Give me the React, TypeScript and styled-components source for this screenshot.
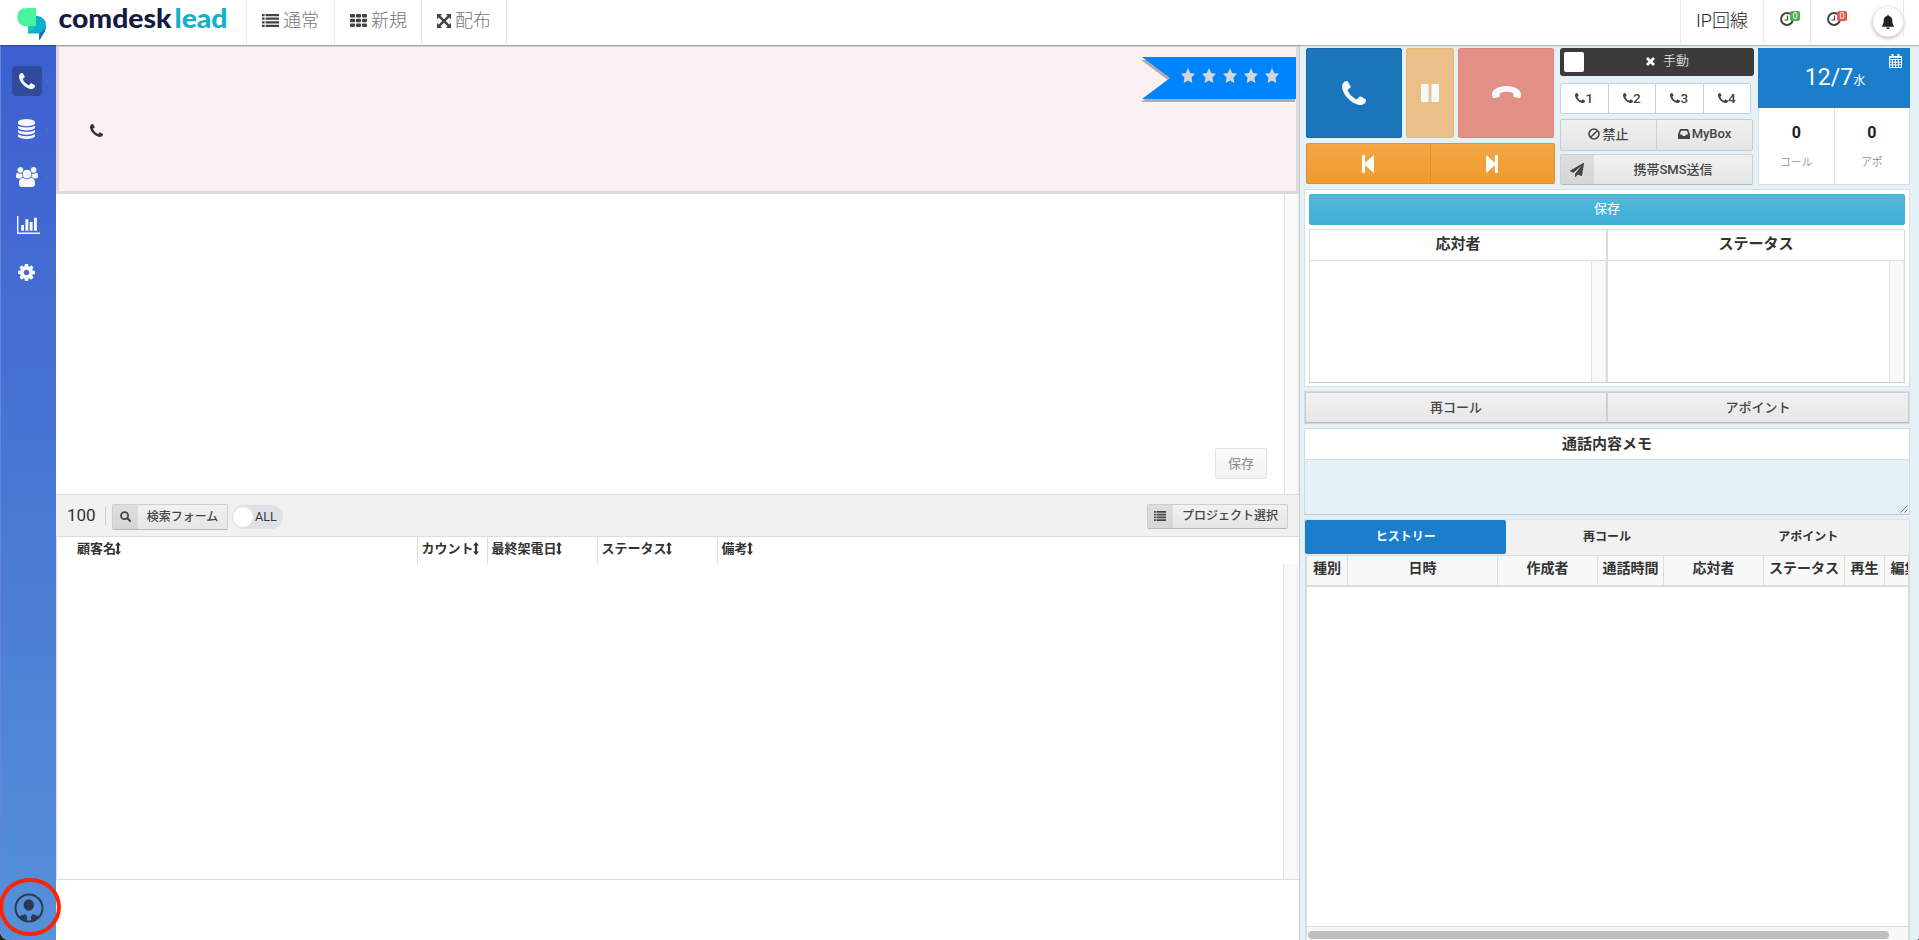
import React from "react";
import styled, { createGlobalStyle, css } from "styled-components";

const GlobalStyle = createGlobalStyle`
  * { box-sizing: border-box; }
  body {
    margin: 0;
    background: #23261f;
    color: #333;
    font-family: Roboto, "Noto Sans CJK JP", sans-serif;
    font-size: 13px;
    overflow: hidden;
  }
  button { font-family: inherit; padding: 0; margin: 0; color: #444; }
`;

/* ---------- icons ---------- */

const PATHS = {
  phone: {
    box: "0 128 1408 1408",
    d: "M1408 1240q0 27-10 70.5t-21 68.5q-21 50-122 106-94 51-186 51-27 0-53-3.5t-57.5-12.5-47-14.5-55.5-20.5-49-18q-98-35-175-83-127-79-264-216t-216-264q-48-77-83-175-3-9-18-49t-20.5-55.5-14.5-47-12.5-57.5-3.5-53q0-92 51-186 56-101 106-122 25-11 68.5-21t70.5-10q14 0 21 3 18 6 53 76 11 19 30 54t35 63.5 31 53.5q3 4 17.5 25t21.5 35.5 7 28.5q0 20-28.5 50t-62 55-62 53-28.5 46q0 9 5 22.5t8.5 20.5 14 24 11.5 19q76 137 174 235t235 174q2 1 19 11.5t24 14 20.5 8.5 22.5 5q18 0 46-28.5t53-62 55-62 50-28.5q14 0 28.5 7t35.5 21.5 25 17.5q25 15 53.5 31t63.5 35 54 30q70 35 76 53 3 7 3 21z",
  },
  database: {
    box: "0 0 1536 1792",
    d: "M768 768q237 0 443-43t325-127v170q0 69-103 128t-280 93.5-385 34.5-385-34.5-280-93.5-103-128v-170q119 84 325 127t443 43zm0 768q237 0 443-43t325-127v170q0 69-103 128t-280 93.5-385 34.5-385-34.5-280-93.5-103-128v-170q119 84 325 127t443 43zm0-384q237 0 443-43t325-127v170q0 69-103 128t-280 93.5-385 34.5-385-34.5-280-93.5-103-128v-170q119 84 325 127t443 43zm0-1152q208 0 385 34.5t280 93.5 103 128v128q0 69-103 128t-280 93.5-385 34.5-385-34.5-280-93.5-103-128v-128q0-69 103-128t280-93.5 385-34.5z",
  },
  users: {
    box: "0 0 1920 1792",
    d: "M593 896q-162 5-265 128h-134q-82 0-138-40.5t-56-118.5q0-353 124-353 6 0 43.5 21t97.5 42.5 119 21.5q67 0 133-23-5 37-5 66 0 139 81 256zm1071 637q0 120-73 189.5t-194 69.5h-874q-121 0-194-69.5t-73-189.5q0-53 3.5-103.5t14-109 26.5-108.5 43-97.5 62-81 85.5-53.5 111.5-20q10 0 43 21.5t73 48 107 48 135 21.5 135-21.5 107-48 73-48 43-21.5q61 0 111.5 20t85.5 53.5 62 81 43 97.5 26.5 108.5 14 109 3.5 103.5zm-1024-1277q0 106-75 181t-181 75-181-75-75-181 75-181 181-75 181 75 75 181zm704 384q0 159-112.5 271.5t-271.5 112.5-271.5-112.5-112.5-271.5 112.5-271.5 271.5-112.5 271.5 112.5 112.5 271.5zm576 225q0 78-56 118.5t-138 40.5h-134q-103-123-265-128 81-117 81-256 0-29-5-66 66 23 133 23 59 0 119-21.5t97.5-42.5 43.5-21q124 0 124 353zm-128-609q0 106-75 181t-181 75-181-75-75-181 75-181 181-75 181 75 75 181z",
  },
  chart: {
    box: "0 0 23 18",
    d: "M0 0h1.4v16.5h21.6v1.5h-23zM4.2 9h2.8v5.8h-2.8zM8.4 3.2h2.9v11.6h-2.9zM12.7 6h2.9v8.8h-2.9zM17 1.7h2.9v13.1h-2.9z",
  },
  cog: {
    box: "128 128 1536 1536",
    d: "M1152 896q0-106-75-181t-181-75-181 75-75 181 75 181 181 75 181-75 75-181zm512-109v222q0 12-8 23t-20 13l-185 28q-19 54-39 91 35 50 107 138 10 12 10 25t-9 23q-27 37-99 108t-94 71q-12 0-26-9l-138-108q-44 23-91 38-16 136-29 186-7 28-36 28h-222q-14 0-24.5-8.5t-11.5-21.5l-28-184q-49-16-90-37l-141 107q-10 9-25 9-14 0-25-11-126-114-165-168-7-10-7-23 0-12 8-23 15-21 51-66.5t54-70.5q-27-50-41-99l-183-27q-13-2-21-12.5t-8-23.5v-222q0-12 8-23t19-13l186-28q14-46 39-92-40-57-107-138-10-12-10-24 0-10 9-23 26-36 98.5-107.5t94.5-71.5q13 0 26 10l138 107q44-23 91-38 16-136 29-186 7-28 36-28h222q14 0 24.5 8.5t11.5 21.5l28 184q49 16 90 37l142-107q9-9 24-9 13 0 25 10 129 119 165 170 7 8 7 22 0 12-8 23-15 21-51 66.5t-54 70.5q26 50 41 98l183 28q13 2 21 12.5t8 23.5z",
  },
  list: {
    box: "0 0 17 13",
    d: "M0 0h2.6v2.2H0zM3.6 0H17v2.2H3.6zM0 3.6h2.6v2.2H0zM3.6 3.6H17v2.2H3.6zM0 7.2h2.6v2.2H0zM3.6 7.2H17v2.2H3.6zM0 10.8h2.6V13H0zM3.6 10.8H17V13H3.6z",
  },
  grid: {
    box: "0 0 17 13",
    d: "M.8 0h3.4q.8 0 .8.8v1.900q0 .8-.8.8H.8q-.8 0-.8-.8V.8Q0 0 .8 0zM6.8 0h3.4q.8 0 .8.8v1.900q0 .8-.8.8H6.8q-.8 0-.8-.8V.8q0-.8.8-.8zM12.8 0h3.4q.8 0 .8.8v1.900q0 .8-.8.8h-3.400q-.8 0-.8-.8V.8q0-.8.8-.8zM.8 4.700h3.400q.8 0 .8.8v1.900q0 .8-.8.8H.8q-.8 0-.8-.8V5.500q0-.8.8-.8zM6.800 4.700h3.400q.8 0 .8.8v1.900q0 .8-.8.8H6.800q-.8 0-.8-.8V5.500q0-.8.8-.8zM12.800 4.700h3.400q.8 0 .8.8v1.900q0 .8-.8.8h-3.400q-.8 0-.8-.8V5.500q0-.8.8-.8zM.8 9.400h3.400q.8 0 .8.8v1.900q0 .8-.8.8H.8q-.8 0-.8-.8v-1.900q0-.8.8-.8zM6.800 9.400h3.400q.8 0 .8.8v1.900q0 .8-.8.8H6.800q-.8 0-.8-.8v-1.900q0-.8.8-.8zM12.800 9.400h3.400q.8 0 .8.8v1.900q0 .8-.8.8h-3.400q-.8 0-.8-.8v-1.900q0-.8.8-.8z",
  },
  expand: {
    box: "0 0 14 14",
    d: "M0 0h5.2L3.5 1.7 7 5.2l3.5-3.5L8.8 0H14v5.2l-1.7-1.7L8.8 7l3.5 3.5L14 8.8V14H8.8l1.7-1.7L7 8.8l-3.5 3.5L5.2 14H0V8.8l1.7 1.7L5.2 7 1.7 3.5 0 5.2z",
  },
  star: {
    box: "0 0 1664 1587",
    d: "M832 0L1089 521 1664 605 1248 1010 1346 1583 832 1312 318 1583 416 1010 0 605 575 521z",
  },
  plane: {
    box: "0 0 1792 1792",
    d: "M1764 11q33 24 27 64l-256 1536q-5 29-32 45-14 8-31 8-11 0-24-5l-453-185-242 295q-18 23-49 23-13 0-22-4-19-7-30.5-23.5t-11.5-36.5v-349l864-1059-1069 925-395-162q-37-14-40-55-2-40 32-59l1664-960q15-9 32-9 20 0 36 11z",
  },
  pause: { box: "0 0 18 18", d: "M1 0h5.600q1 0 1 1v16q0 1-1 1H1q-1 0-1-1V1q0-1 1-1zM11.400 0H17q1 0 1 1v16q0 1-1 1h-5.600q-1 0-1-1V1q0-1 1-1z" },
  prev: { box: "0 0 12 18", d: "M0 .7Q0 0 .7 0h1.8q.6 0 .6.7v7.1L12 0v18L3.1 10.2v7.1q0 .7-.6.7H.7q-.7 0-.7-.7z" },
  next: { box: "0 0 12 18", d: "M12 .7q0-.7-.7-.7H9.5q-.6 0-.6.7v7.1L0 0v18l8.9-7.8v7.1q0 .7.6.7h1.8q.7 0 .7-.7z" },
  hangup: {
    box: "0 0 30 14",
    d: "M15 0C6 0 0 4 0 9.2c0 1 .1 2.3.7 3.2.4.6 1 .8 1.8.6l4-.8c1-.2 1.5-.8 1.5-1.7l-.1-2.600C9.500 6.700 12 6.100 15 6.100s5.500.6 7.100 1.800l-.1 2.600c0 .9.5 1.500 1.500 1.700l4 .8c.8.2 1.400 0 1.800-.6.6-.9.700-2.200.7-3.200C30 4 24 0 15 0z",
  },
  close: { box: "0 0 10 10", d: "M2.2 0L5 2.8 7.8 0 10 2.2 7.2 5 10 7.8 7.8 10 5 7.2 2.2 10 0 7.8 2.8 5 0 2.2z" },
  bell: {
    box: "0 0 14 16",
    d: "M7 0c.7 0 1 .5 1 1.100C10.500 1.600 12 3.500 12 6c0 3.500.7 5.300 2 6.600v.9H0v-.9C1.300 11.300 2 9.500 2 6c0-2.500 1.500-4.400 4-4.900C6 .5 6.300 0 7 0zM5.100 14.200h3.800c0 1.100-.8 1.800-1.900 1.800s-1.900-.7-1.900-1.800z",
  },
  inbox: {
    box: "0 0 14 12",
    d: "M3 0h8q.6 0 .9.6L14 6.200V11q0 1-1 1H1q-1 0-1-1V6.200L2.100.6Q2.400 0 3 0zM3.600 2L2.100 6.500h2.600l.9 2h2.800l.9-2h2.600L10.400 2z",
  },
  sort: { box: "0 0 6 12", d: "M3 0l3 3.200H4.100v5.600H6L3 12 0 8.800h1.900V3.200H0z" },
};

type IconName = keyof typeof PATHS;

const Glyph = styled.svg<{ $w: number; $h: number }>`
  display: block;
  flex: none;
  width: ${(p) => p.$w}px;
  height: ${(p) => p.$h}px;
  fill: currentColor;
`;

const Icon = ({ name, w, h = w }: { name: IconName; w: number; h?: number }) => (
  <Glyph viewBox={PATHS[name].box} preserveAspectRatio="none" $w={w} $h={h}>
    <path fillRule="evenodd" d={PATHS[name].d} />
  </Glyph>
);

/* ---------- frame ---------- */

const Frame = styled.div`
  display: flex;
  flex-direction: column;
  width: 1919px;
  height: 940px;
  background: #fff;
  border-radius: 0 0 3px 9px;
  overflow: hidden;
  position: relative;
`;
const Header = styled.header`
  display: flex;
  flex: none;
  height: 45px;
  position: relative;
  z-index: 1;
  background: #fff;
  box-shadow: 0 1px 1px rgba(0, 0, 0, 0.25);
`;
const Logo = styled.div`
  width: 246px;
  padding-left: 17px;
`;
const NavItem = styled.a<{ $w: number }>`
  display: flex;
  align-items: center;
  gap: 4px;
  width: ${(p) => p.$w}px;
  height: 44px;
  padding: 0 0 3px 15px;
  border-left: 1px solid #e7e7e7;
  color: #444;
  span { font-size: 18px; color: #767676; line-height: 26px; font-weight: 300; }
`;
const NavEnd = styled.div`
  flex: 1;
  height: 44px;
  border-left: 1px solid #e7e7e7;
`;
const HeadCell = styled.div<{ $w: number }>`
  display: flex;
  align-items: center;
  justify-content: center;
  width: ${(p) => p.$w}px;
  height: 44px;
  padding-bottom: 6px;
  border-left: 1px solid #e7e7e7;
  font-size: 18px;
  font-weight: 300;
  color: #222;
`;
const AlertCell = styled.div<{ $w: number }>`
  display: flex;
  gap: 26px;
  width: ${(p) => p.$w}px;
  height: 44px;
  padding: 12px 0 0 16px;
  border-left: 1px solid #e7e7e7;
`;
const HeadEnd = styled.div`
  width: 16px;
  height: 37px;
  border-left: 1px solid #e7e7e7;
`;
const ClockWrap = styled.div`
  position: relative;
  width: 20px;
  height: 16px;
`;
const Badge = styled.span<{ $c: string }>`
  position: absolute;
  left: 10px;
  top: -1px;
  width: 10px;
  height: 10px;
  border-radius: 2px;
  background: ${(p) => p.$c};
  color: #fff;
  font-size: 9px;
  line-height: 10px;
  text-align: center;
`;
const Bell = styled.button`
  display: flex;
  align-items: center;
  justify-content: center;
  flex: none;
  width: 30px;
  height: 30px;
  margin-top: -5px;
  border: 0;
  border-radius: 50%;
  background: #fff;
  color: #222;
  box-shadow: 0 1px 4px rgba(0, 0, 0, 0.35);
`;
const Body = styled.div`
  display: flex;
  flex: 1;
  min-height: 0;
`;

/* ---------- sidebar ---------- */

const Sidebar = styled.nav`
  display: flex;
  flex-direction: column;
  gap: 17.850px;
  flex: none;
  width: 56px;
  padding: 21px 0 0 11px;
  border-left: 1px solid #6684dc;
  background: linear-gradient(#3d5fd0, #4a7ad3 55%, #5591d9);
`;
const SideItem = styled.a<{ $active?: boolean; $shift?: number }>`
  display: flex;
  align-items: center;
  height: 30px;
  color: #f8f8f8;
  > div {
    display: flex;
    align-items: center;
    justify-content: center;
    width: 30px;
    height: 30px;
    padding: 0 1px 0 ${(p) => p.$shift ?? 0}px;
    border-radius: 4px;
    ${(p) => p.$active && css`background: #304b9c;`}
  }
  > svg:last-child { margin-left: 3px; fill: none; stroke: #5c70a8; }
`;
const UserMark = styled.div`
  position: absolute;
  left: -1px;
  top: 878px;
  width: 62px;
  height: 58px;
  padding: 11px 0 0 11px;
  border: 4px solid #ff2305;
  border-radius: 30px / 29px;
`;

const Chevron = () => (
  <Glyph viewBox="0 0 4 6" $w={4} $h={6}><path d="M.6.500L3.200 3 .6 5.500" /></Glyph>
);

/* ---------- main column ---------- */

const Main = styled.main`
  display: flex;
  flex-direction: column;
  width: 1243px;
  flex: none;
`;
const Customer = styled.section`
  display: flex;
  justify-content: space-between;
  height: 149px;
  padding: 10px 0 0 31px;
  border: 3px solid #dddada;
  border-top-width: 2px;
  background: #fbf1f0;
  > svg { margin-top: 67px; }
`;
const Ribbon = styled.div`
  width: 154px;
  height: 46px;
  filter: drop-shadow(-1px 3px 0 #b0adb0);
`;
const RibbonBody = styled.div`
  display: flex;
  gap: 7px;
  height: 42px;
  padding: 11px 0 0 39px;
  background: #0084fd;
  color: #d6d6d6;
  clip-path: polygon(0 0, 100% 0, 100% 100%, 0 100%, 28px 50%);
`;
const Detail = styled.section`
  display: flex;
  height: 300px;
`;
const DetailBody = styled.div`
  display: flex;
  flex: 1;
  align-items: flex-end;
  justify-content: flex-end;
  padding: 0 17px 15px 0;
`;
const Gutter = styled.div`
  width: 15px;
  flex: none;
  background: #f9f9f9;
  border-left: 1px solid #e3e3e3;
  border-right: 1px solid #ececec;
`;
const GhostButton = styled.button`
  width: 52px;
  height: 31px;
  padding-bottom: 3px;
  border: 1px solid #e2e2e2;
  border-radius: 2px;
  background: linear-gradient(#fafafa, #f3f3f3);
  color: #8d8d8d;
  font-size: 13px;
`;
const Toolbar = styled.div`
  display: flex;
  align-items: center;
  height: 43px;
  padding: 0 11px;
  background: #f1f1f1;
  border-top: 1px solid #dcdcdc;
  border-bottom: 1px solid #dcdcdc;
`;
const Count = styled.span`
  width: 39px;
  height: 18px;
  border-right: 1px solid #ccc;
  margin-right: 6px;
  font-size: 17px;
  line-height: 17px;
`;
const LabeledButton = styled.button<{ $w: number; $h: number; $icon: number; $fs?: number; $drop?: number }>`
  display: flex;
  align-items: stretch;
  width: ${(p) => p.$w}px;
  height: ${(p) => p.$h}px;
  margin-top: ${(p) => p.$drop ?? 0}px;
  border: 1px solid #cfcfcf;
  border-bottom-color: #b8b8b8;
  border-radius: 2px;
  background: linear-gradient(#f1f1f1, #e6e6e6);
  font-size: ${(p) => p.$fs ?? 12}px;
  font-weight: 500;
  > div {
    display: flex;
    align-items: center;
    justify-content: center;
    width: ${(p) => p.$icon}px;
    padding-right: 1px;
    background: linear-gradient(#dedede, #d6d6d6);
  }
  > span { flex: 1; align-self: center; text-align: center; line-height: 18px; }
`;
const Toggle = styled.div`
  display: flex;
  align-items: center;
  gap: 2px;
  width: 51px;
  height: 24px;
  margin: 2px 0 0 4px;
  padding-left: 1px;
  border-radius: 12px;
  background: #dfe1e6;
  color: #333a48;
  font-size: 12.500px;
  i { width: 20px; height: 20px; border-radius: 50%; background: #fff; }
`;
const Spacer = styled.div`flex: 1;`;
const ListHead = styled.div`
  display: flex;
  height: 27px;
  border-left: 1px solid #ddd;
`;
const ListCol = styled.div<{ $w?: number; $first?: boolean }>`
  display: flex;
  align-items: center;
  ${(p) => (p.$w ? css`width: ${p.$w}px;` : css`flex: 1;`)}
  padding: 0 0 4px ${(p) => (p.$first ? 20 : 3.5)}px;
  ${(p) => !p.$first && css`border-left: 1px solid #ddd;`}
  font-size: 13px;
  line-height: 19px;
  font-weight: 700;
  white-space: nowrap;
  svg { margin-left: -1px; }
`;
const ListBody = styled.div`
  display: flex;
  justify-content: flex-end;
  height: 316px;
  border-left: 1px solid #ddd;
  border-bottom: 1px solid #dcdcdc;
  padding-right: 1px;
`;

/* ---------- right column ---------- */

const Side = styled.aside`
  display: flex;
  flex-direction: column;
  flex: 1;
  min-width: 0;
  padding: 3px 9px 0 4px;
  border-left: 1px solid #c5cbd0;
  background: #e4f1f7;
`;
const Controls = styled.div`
  display: flex;
  flex: none;
  height: 137px;
  margin-left: 2px;
`;
const Dial = styled.div`
  width: 249px;
  margin-right: 5px;
`;
const DialRow = styled.div`
  display: flex;
  gap: 4px;
  margin-bottom: 5px;
`;
const DialButton = styled.button<{ $w: number; $bg: string; $edge: string }>`
  display: flex;
  align-items: center;
  justify-content: center;
  width: ${(p) => p.$w}px;
  height: 90px;
  padding-bottom: 1px;
  border: 1px solid ${(p) => p.$edge};
  border-radius: 2px;
  background: ${(p) => p.$bg};
  color: #f6f9fb;
`;
const SkipRow = styled.div`
  display: flex;
  height: 41px;
  border: 1px solid #e28c2b;
  border-top-color: #c99567;
  border-radius: 2px;
  background: linear-gradient(#f2a746, #f19a2c);
`;
const Skip = styled.button`
  display: flex;
  flex: 1;
  align-items: center;
  justify-content: center;
  padding-right: 1px;
  border: 0;
  background: none;
  color: #fff;
  & + & { border-left: 1px solid #ed8c1b; }
`;
const Tools = styled.div`
  width: 194px;
  margin-right: 4px;
`;
const Manual = styled.div`
  display: flex;
  align-items: center;
  height: 28px;
  margin-bottom: 7px;
  padding-left: 4px;
  border-radius: 3px;
  background: #3b3b3b;
  color: #fff;
  font-size: 13px;
  i { width: 20px; height: 20px; border-radius: 2px; background: #fff; }
  svg { margin: -2px 8px 0 62px; }
  span { margin-top: -6px; font-weight: 300; }
`;
const Lines = styled.div`
  display: flex;
  width: 191px;
  height: 31px;
  margin-bottom: 5px;
  border: 1px solid #cbd2d6;
  border-radius: 2px;
  background: #fff;
`;
const Line = styled.button`
  display: flex;
  flex: 1;
  align-items: center;
  justify-content: center;
  padding-bottom: 1px;
  border: 0;
  background: none;
  font-size: 13.500px;
  font-weight: 500;
  & + & { border-left: 1px solid #cfcfcf; }
`;
const Pair = styled.div`
  display: flex;
  width: 193px;
  height: 32px;
  margin-bottom: 3px;
  border: 1px solid #c9cbcc;
  border-radius: 2px;
  background: linear-gradient(#f1f1f1, #e5e5e5);
`;
const PairButton = styled(Line)`
  gap: 2px;
  padding-bottom: 3px;
  font-size: 13px;
`;
const DateCard = styled.div`
  width: 152px;
`;
const DateHead = styled.div`
  display: flex;
  align-items: baseline;
  justify-content: center;
  height: 60px;
  padding: 16px 0 0 2px;
  position: relative;
  background: #1b7ecb;
  color: #fff;
  font-size: 23px;
  line-height: 27px;
  small { font-size: 12px; }
  svg { position: absolute; right: 8px; top: 6px; }
`;
const Stats = styled.div`
  display: flex;
  height: 77px;
  background: #fff;
  border: 1px solid #d9e0e4;
  border-top: 0;
`;
const Stat = styled.div`
  flex: 1;
  text-align: center;
  padding-top: 15px;
  & + & { border-left: 1px solid #dde1e5; }
  b { display: block; font-size: 16px; line-height: 20px; color: #222; }
  span { display: block; margin-top: 12px; font-size: 10.800px; line-height: 16px; color: #606060; font-weight: 300; }
`;
const Result = styled.section`
  flex: none;
  height: 198px;
  margin-top: 4px;
  padding: 4px;
  border: 1px solid #d8dfe4;
  background: #fff;
`;
const SaveButton = styled.button`
  display: block;
  width: 100%;
  height: 31px;
  padding-bottom: 2px;
  border: 1px solid #46b0d3;
  border-radius: 2px;
  background: linear-gradient(#53b9db, #3eafd6);
  color: #fff;
  font-size: 13px;
  line-height: 26px;
`;
const Choices = styled.div`
  display: flex;
  height: 154px;
  margin-top: 4px;
  border: 1px solid #d6d9e0;
  border-bottom-color: #c8cacf;
`;
const Choice = styled.div`
  display: flex;
  flex-direction: column;
  flex: 1;
  & + & { border-left: 2px solid #d9dbe1; }
  h3 {
    height: 31px;
    margin: 0;
    border-bottom: 1px solid #dbdbe3;
    font-size: 15px;
    line-height: 29px;
    text-align: center;
    color: #333;
  }
`;
const ChoiceBody = styled.div`
  display: flex;
  flex: 1;
  justify-content: flex-end;
`;
const Actions = styled.div`
  display: flex;
  flex: none;
  height: 33px;
  margin-top: 4px;
  border: 1px solid #d6d9db;
`;
const Action = styled.button`
  flex: 1;
  border: 1px solid #cfcfcf;
  border-bottom: 1px solid #b9b9b9;
  background: linear-gradient(#f2f2f2, #e6e6e6);
  font-size: 13px;
  font-weight: 500;
  line-height: 27px;
`;
const Memo = styled.section`
  display: flex;
  flex: none;
  flex-direction: column;
  height: 87px;
  margin-top: 4px;
  border: 1px solid #d5dade;
  border-bottom-color: #bfc4c8;
  h3 {
    height: 31px;
    flex: none;
    margin: 0;
    border-bottom: 1px solid #d8dcdf;
    background: #fff;
    font-size: 15px;
    line-height: 30px;
    text-align: center;
  }
`;
const MemoInput = styled.div`
  display: flex;
  flex: 1;
  align-items: flex-end;
  justify-content: flex-end;
  padding: 1px;
`;
const Tabs = styled.div`
  display: flex;
  flex: none;
  height: 36px;
  margin-top: 4px;
  border: 1px solid #dfe2e4;
  border-bottom: 0;
  background: #f1f1f1;
`;
const Tab = styled.button<{ $on?: boolean }>`
  flex: 1;
  height: 34px;
  border: 0;
  border-radius: 2px;
  background: ${(p) => (p.$on ? "#1b7ecb" : "transparent")};
  color: ${(p) => (p.$on ? "#fff" : "#333")};
  font-size: 12px;
  font-weight: 700;
  line-height: 30px;
`;
const History = styled.div`
  display: flex;
  flex-direction: column;
  flex: 1;
  margin-left: 1px;
  border: 2px solid #dcdcdc;
  border-bottom: 0;
  border-top-width: 1px;
  background: #fff;
  overflow: hidden;
`;
const HistoryHead = styled.div`
  display: flex;
  flex: none;
  height: 31px;
  border-bottom: 2px solid #dcdcdc;
  background: #f8f8f8;
`;
const HCell = styled.div<{ $w: number }>`
  flex: none;
  width: ${(p) => p.$w}px;
  border-right: 1px solid #dcdcdc;
  font-size: 14px;
  font-weight: 700;
  line-height: 25px;
  text-align: center;
  white-space: nowrap;
`;
const HistoryBody = styled.div`flex: 1;`;
const Scroll = styled.div`
  flex: none;
  height: 14px;
  padding: 4px 19px 1px 1px;
  border-top: 1px solid #dcdcdc;
  background: #f8f8f8;
  div { height: 8px; border-radius: 4px; background: #bfbfbf; }
`;

const Clock = ({ color }: { color: string }) => (
  <ClockWrap>
    <Glyph viewBox="0 0 14 14" $w={14} $h={14}>
      <circle cx="7" cy="7" r="5.900" fill="none" stroke="#444" strokeWidth="2" />
      <path d="M7.500 3.500V8H4.500" fill="none" stroke="#444" strokeWidth="1.200" />
    </Glyph>
    <Badge $c={color}>0</Badge>
  </ClockWrap>
);

const SIDE: { name: IconName; w: number; h: number; active?: boolean; shift?: number; arrow: boolean }[] = [
  { name: "phone", w: 16, h: 16, active: true, arrow: true },
  { name: "database", w: 17, h: 20, arrow: true },
  { name: "users", w: 22, h: 20, shift: 1, arrow: true },
  { name: "chart", w: 23, h: 18, shift: 4, arrow: false },
  { name: "cog", w: 17, h: 17, arrow: true },
];

const LIST_COLS: [string, number | undefined][] = [
  ["顧客名", 360],
  ["カウント", 70],
  ["最終架電日", 110],
  ["ステータス", 120],
  ["備考", undefined],
];

const HISTORY_COLS: [string, number][] = [
  ["種別", 41],
  ["日時", 150],
  ["作成者", 100],
  ["通話時間", 66],
  ["応対者", 100],
  ["ステータス", 81],
  ["再生", 40],
  ["編集", 40],
];

export default function App() {
  return (
    <Frame>
      <GlobalStyle />
      <Header>
        <Logo>
          <svg width="229" height="44" viewBox="17 0 229 44">
            <path d="M35 16h3q8 1.500 8 9.500 0 3.500-1.500 6.500L39 40.500V33.500H28v-7z" fill="#0cafcd" />
            <path d="M46 25q0 3.800-1.600 7L39.300 40.500V33.200Q44.500 31 46 25z" fill="#1b6fb5" />
            <path d="M27 8h9v18l-8 .5Q17.300 26.500 17.300 17.300 17.300 8 27 8z" fill="#48f59d" />
            <path d="M36 26l-8 7.500v-7z" fill="#1ec8b8" />
            <text x="58.500" y="27.500" fill="#141b42" fontFamily="Lato, sans-serif" fontWeight="900" fontSize="26" textLength="113" lengthAdjust="spacingAndGlyphs">comdesk</text>
            <text x="174.500" y="27.500" fill="#12b0cb" fontFamily="Lato, sans-serif" fontWeight="900" fontSize="26" textLength="53" lengthAdjust="spacingAndGlyphs">lead</text>
          </svg>
        </Logo>
        <NavItem $w={88}><Icon name="list" w={17} h={13} /><span>通常</span></NavItem>
        <NavItem $w={87}><Icon name="grid" w={17} h={13} /><span>新規</span></NavItem>
        <NavItem $w={85}><Icon name="expand" w={14} /><span>配布</span></NavItem>
        <NavEnd />
        <HeadCell $w={83}>IP回線</HeadCell>
        <AlertCell $w={47}>
          <Clock color="#4cae4c" />
        </AlertCell>
        <AlertCell $w={93}>
          <Clock color="#e5564b" />
          <Bell><Icon name="bell" w={12} h={14} /></Bell>
        </AlertCell>
        <HeadEnd />
      </Header>
      <Body>
        <Sidebar>
          {SIDE.map((s) => (
            <SideItem key={s.name} $active={s.active} $shift={s.shift}>
              <div><Icon name={s.name} w={s.w} h={s.h} /></div>
              {s.arrow && <Chevron />}
            </SideItem>
          ))}
        </Sidebar>
        <Main>
          <Customer>
            <Icon name="phone" w={13} />
            <Ribbon>
              <RibbonBody>
                {[1, 2, 3, 4, 5].map((n) => <Icon key={n} name="star" w={14} h={15} />)}
              </RibbonBody>
            </Ribbon>
          </Customer>
          <Detail>
            <DetailBody><GhostButton>保存</GhostButton></DetailBody>
            <Gutter />
          </Detail>
          <Toolbar>
            <Count>100</Count>
            <LabeledButton $w={116} $h={26} $icon={25} $drop={2}>
              <div>
                <Glyph viewBox="0 0 12 12" $w={11} $h={11}>
                  <circle cx="5" cy="5" r="3.900" fill="none" stroke="#444" strokeWidth="1.900" />
                  <path d="M8 8l3 3" stroke="#444" strokeWidth="2.200" strokeLinecap="round" />
                </Glyph>
              </div>
              <span>検索フォーム</span>
            </LabeledButton>
            <Toggle><i />ALL</Toggle>
            <Spacer />
            <LabeledButton $w={141} $h={25} $icon={25} $drop={1}>
              <div><Icon name="list" w={12} h={10} /></div>
              <span>プロジェクト選択</span>
            </LabeledButton>
          </Toolbar>
          <ListHead>
            {LIST_COLS.map(([label, w], i) => (
              <ListCol key={label} $w={w} $first={i === 0}>
                {label}<Icon name="sort" w={6} h={13} />
              </ListCol>
            ))}
          </ListHead>
          <ListBody><Gutter /></ListBody>
        </Main>
        <Side>
          <Controls>
            <Dial>
              <DialRow>
                <DialButton $w={96} $bg="#1b75bb" $edge="#1a69aa"><Icon name="phone" w={24} /></DialButton>
                <DialButton $w={48} $bg="#ebc088" $edge="#ecb873"><Icon name="pause" w={18} /></DialButton>
                <DialButton $w={96} $bg="#e39087" $edge="#e08580"><Icon name="hangup" w={29} h={13} /></DialButton>
              </DialRow>
              <SkipRow>
                <Skip><Icon name="prev" w={12} h={18} /></Skip>
                <Skip><Icon name="next" w={12} h={18} /></Skip>
              </SkipRow>
            </Dial>
            <Tools>
              <Manual><i /><Icon name="close" w={9} /><span>手動</span></Manual>
              <Lines>
                {[1, 2, 3, 4].map((n) => <Line key={n}><Icon name="phone" w={10} />{n}</Line>)}
              </Lines>
              <Pair>
                <PairButton>
                  <Glyph viewBox="0 0 12 12" $w={12} $h={12}>
                    <circle cx="6" cy="6" r="5" fill="none" stroke="#444" strokeWidth="1.600" />
                    <path d="M2.700 9.300l6.600-6.600" stroke="#444" strokeWidth="1.600" />
                  </Glyph>
                  禁止
                </PairButton>
                <PairButton><Icon name="inbox" w={12} h={10} />MyBox</PairButton>
              </Pair>
              <LabeledButton $w={193} $h={31} $icon={33} $fs={13}>
                <div><Icon name="plane" w={14} /></div>
                <span>携帯SMS送信</span>
              </LabeledButton>
            </Tools>
            <DateCard>
              <DateHead>
                12/7<small>水</small>
                <Glyph viewBox="0 0 13 14" $w={13} $h={14}>
                  <path d="M.5 2.500h12v11H.5zM.5 5.500h12M3.500 5.500v8M6.500 5.500v8M9.500 5.500v8M.5 8.200h12M.5 10.900h12" fill="none" stroke="#fff" strokeWidth="1" />
                  <path d="M.3 2.500h12.400V4H.3zM2.500 0h2v3.500h-2zM8.500 0h2v3.500h-2z" fill="#fff" />
                </Glyph>
              </DateHead>
              <Stats>
                <Stat><b>0</b><span>コール</span></Stat>
                <Stat><b>0</b><span>アポ</span></Stat>
              </Stats>
            </DateCard>
          </Controls>
          <Result>
            <SaveButton>保存</SaveButton>
            <Choices>
              <Choice><h3>応対者</h3><ChoiceBody><Gutter /></ChoiceBody></Choice>
              <Choice><h3>ステータス</h3><ChoiceBody><Gutter /></ChoiceBody></Choice>
            </Choices>
          </Result>
          <Actions>
            <Action>再コール</Action>
            <Action>アポイント</Action>
          </Actions>
          <Memo>
            <h3>通話内容メモ</h3>
            <MemoInput>
              <Glyph viewBox="0 0 8 8" $w={8} $h={8}>
                <path d="M.5 7.500l7-7M4.500 7.500l3-3" stroke="#555" strokeWidth=".8" />
              </Glyph>
            </MemoInput>
          </Memo>
          <Tabs>
            <Tab $on>ヒストリー</Tab>
            <Tab>再コール</Tab>
            <Tab>アポイント</Tab>
          </Tabs>
          <History>
            <HistoryHead>
              {HISTORY_COLS.map(([label, w]) => <HCell key={label} $w={w}>{label}</HCell>)}
            </HistoryHead>
            <HistoryBody />
            <Scroll><div /></Scroll>
          </History>
        </Side>
      </Body>
      <UserMark>
        <Glyph viewBox="0 0 30 30" $w={30} $h={30}>
          <circle cx="15" cy="15" r="13.500" fill="none" stroke="#2d3b52" strokeWidth="2" />
          <ellipse cx="14.800" cy="12" rx="5.200" ry="5.800" fill="#2d3b52" />
          <path d="M4.500 23.500l7-2.500 1.800 3.500-1 4.500Q7.500 28 4.500 23.500zM25.500 23.500l-7-2.500-1.800 3.500 1 4.500q4.800-1 7.800-5.500z" fill="#2d3b52" />
        </Glyph>
      </UserMark>
    </Frame>
  );
}
